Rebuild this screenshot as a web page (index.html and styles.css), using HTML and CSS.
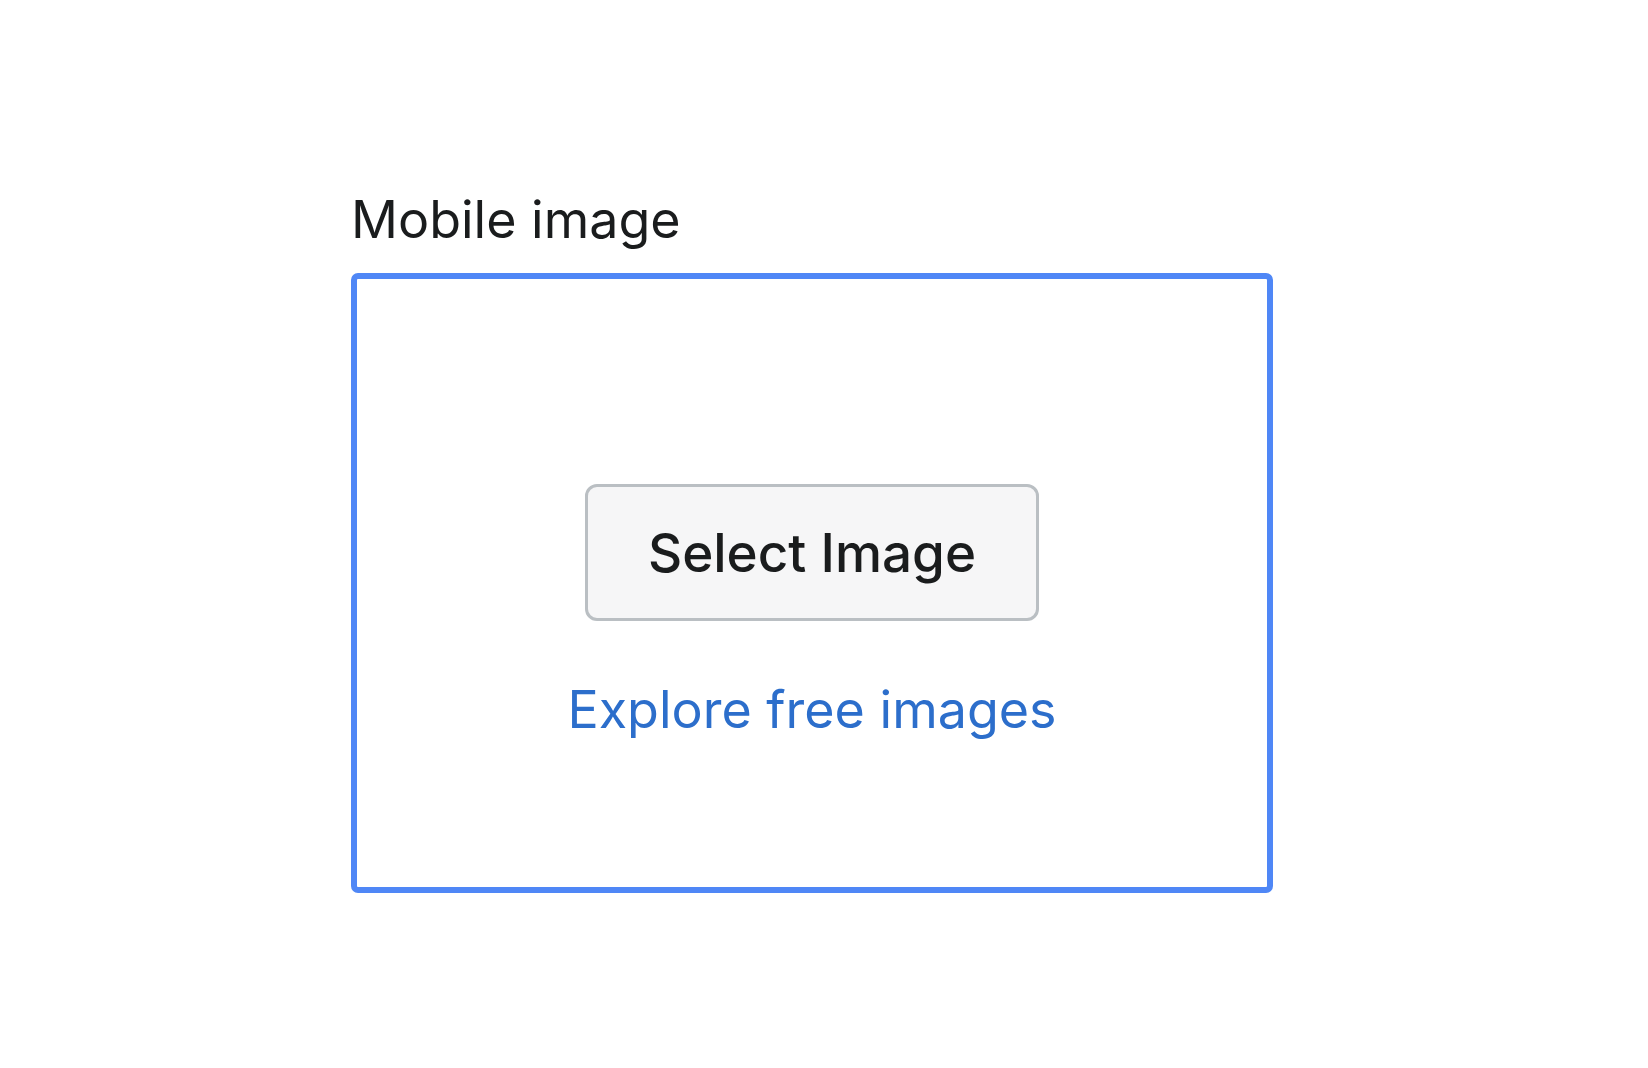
FILE: index.html
```html
<!DOCTYPE html>
<html lang="en">
<head>
<meta charset="utf-8">
<title>Mobile image</title>
<link rel="stylesheet" href="styles.css">
</head>
<body>
<div class="field">
  <label class="label">Mobile image</label>
  <div class="dropzone">
    <button class="select-btn" type="button">Select Image</button>
    <a class="explore" href="#">Explore free images</a>
  </div>
</div>
</body>
</html>
```
FILE: styles.css
```css
html, body {
  margin: 0;
  padding: 0;
  background: #ffffff;
}
body {
  font-family: Inter, "Noto Sans", sans-serif;
  color: #202223;
}
.field {
  padding-top: 190px;
  padding-left: 351px;
  display: flex;
  flex-direction: column;
  align-items: flex-start;
}
.label {
  font-size: 52px;
  line-height: 60px;
  font-weight: 400;
  color: #1a1c1d;
  margin-bottom: 23px;
}
.dropzone {
  box-sizing: border-box;
  width: 922px;
  height: 620px;
  border: 6px solid #4f87f6;
  border-radius: 7px;
  display: flex;
  flex-direction: column;
  align-items: center;
  padding-top: 205px;
}
.select-btn {
  box-sizing: border-box;
  width: 454px;
  height: 137px;
  background: #f6f6f7;
  border: 3px solid #babfc3;
  border-radius: 12px;
  font-family: Inter, "Noto Sans", sans-serif;
  font-size: 53px;
  font-weight: 500;
  color: #1a1c1d;
  padding: 0;
}
.explore {
  margin-top: 56px;
  font-size: 52px;
  line-height: 66px;
  color: #2c6ecb;
  text-decoration: none;
}
```
